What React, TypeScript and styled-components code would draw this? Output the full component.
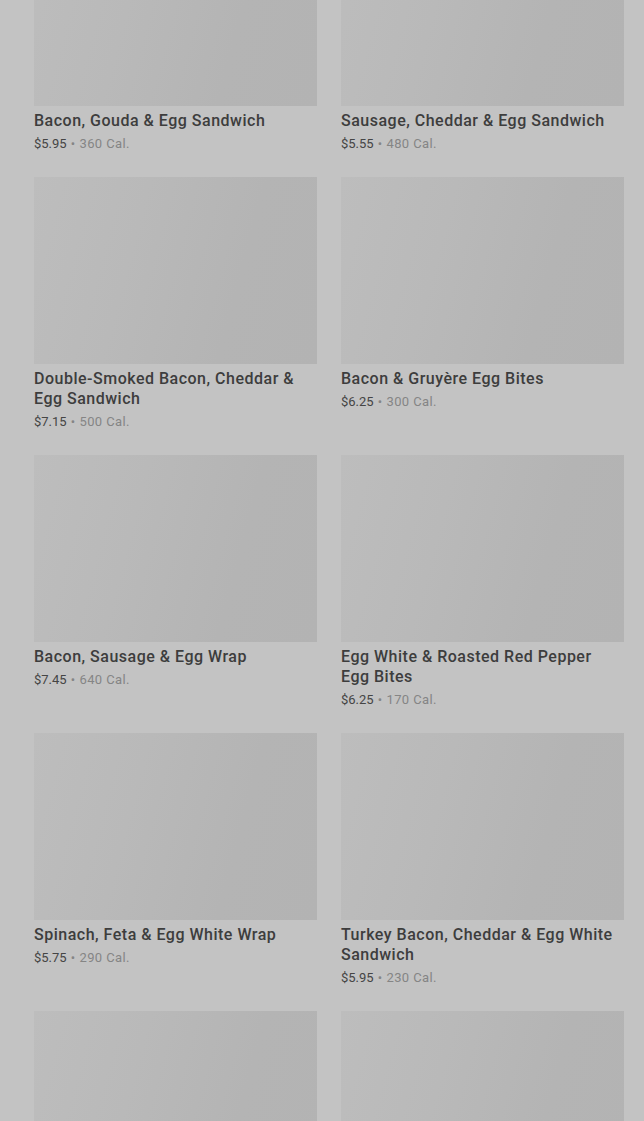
import React from "react";
import styled, { createGlobalStyle } from "styled-components";

interface Item {
  name: string;
  price: string;
  cal: number;
}

const items: Item[] = [
  { name: "Bacon, Gouda & Egg Sandwich", price: "$5.95", cal: 360 },
  { name: "Sausage, Cheddar & Egg Sandwich", price: "$5.55", cal: 480 },
  { name: "Double-Smoked Bacon, Cheddar & Egg Sandwich", price: "$7.15", cal: 500 },
  { name: "Bacon & Gruyère Egg Bites", price: "$6.25", cal: 300 },
  { name: "Bacon, Sausage & Egg Wrap", price: "$7.45", cal: 640 },
  { name: "Egg White & Roasted Red Pepper Egg Bites", price: "$6.25", cal: 170 },
  { name: "Spinach, Feta & Egg White Wrap", price: "$5.75", cal: 290 },
  { name: "Turkey Bacon, Cheddar & Egg White Sandwich", price: "$5.95", cal: 230 },
  { name: "", price: "", cal: 0 },
  { name: "", price: "", cal: 0 },
];

const GlobalStyle = createGlobalStyle`
  html, body {
    margin: 0;
    background: #c3c3c3;
    overflow: hidden;
  }
  body {
    font-family: Roboto, "Noto Sans", sans-serif;
  }
`;

const Page = styled.div`
  height: 1121px;
  overflow: hidden;
  background: #c3c3c3;
`;

const Grid = styled.div`
  display: grid;
  grid-template-columns: 283px 283px;
  column-gap: 24px;
  row-gap: 24px;
  padding: 0 20px 0 34px;
  margin-top: -81px;
`;

const Card = styled.div`
  display: flex;
  flex-direction: column;
`;

const Thumb = styled.div`
  height: 187px;
  background: linear-gradient(105deg, #bdbdbd 0%, #b9b9b9 35%, #b4b4b4 70%, #b3b3b3 100%);
`;

const Title = styled.div`
  margin-top: 5px;
  font-size: 16px;
  line-height: 20px;
  font-weight: 500;
  color: #3d3d3d;
  letter-spacing: 0.5px;
`;

const Meta = styled.div`
  margin-top: 4px;
  font-size: 13px;
  line-height: 18px;
  color: #858585;
  letter-spacing: 0.4px;
`;

const Price = styled.span`
  color: #454545;
  letter-spacing: 0;
`;

const Dot = styled.span`
  margin: 0 4px;
`;

export default function App() {
  return (
    <Page>
      <GlobalStyle />
      <Grid>
        {items.map((it, i) => (
          <Card key={i}>
            <Thumb />
            {it.name && (
              <>
                <Title>{it.name}</Title>
                <Meta>
                  <Price>{it.price}</Price>
                  <Dot>•</Dot>
                  {it.cal} Cal.
                </Meta>
              </>
            )}
          </Card>
        ))}
      </Grid>
    </Page>
  );
}
